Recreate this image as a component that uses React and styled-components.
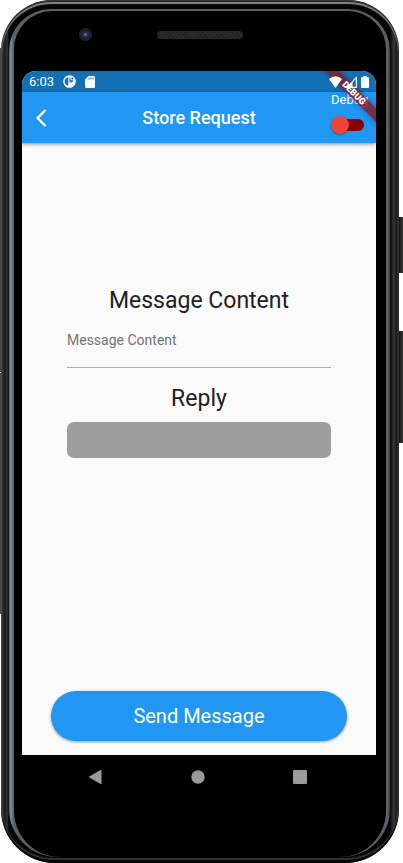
import React, { useState } from "react";
import styled, { createGlobalStyle } from "styled-components";

const GlobalStyle = createGlobalStyle`
  * { box-sizing: border-box; }
  body { margin: 0; background: #fff; font-family: Roboto, "Noto Sans", sans-serif; }
  button, input { font: inherit; }
`;

const Device = styled.div`
  position: relative;
  display: flex;
  min-height: 100vh;
  padding: 0 4px 0 1px;
`;

const SideKey = styled.span`
  position: absolute;
  top: ${(p) => p.$top}px;
  height: ${(p) => p.$height}px;
  ${(p) => p.$side}: 0;
  width: ${(p) => (p.$side === "left" ? 1 : 4)}px;
  background: ${(p) => (p.$side === "left" ? "#4a4a4a" : "linear-gradient(90deg, #111, #3c3c3c)")};
`;

const Case = styled.div`
  flex: 1;
  display: flex;
  padding: 2px 1px 3px;
  border-radius: 51px 51px 54px 54px;
  background: linear-gradient(90deg, #4a4a4a, #222 8px, #222 calc(100% - 8px), #303030);
  box-shadow: inset 0 1px 0 #3a3a3a, inset 0 -3px 0 #060606;
`;

const Edge = styled.div`
  flex: 1;
  display: flex;
  padding: 7px 8px 3px 7px;
  border-radius: 49px 49px 51px 51px;
  background: linear-gradient(90deg, #303030, #1d1d1b 3px, #343434 5px, #050505 7px, #050505 calc(100% - 8px), #151515 calc(100% - 7px), #393939 calc(100% - 4px), #1b1b1b calc(100% - 2px), #242424);
  box-shadow: inset 0 2px 1px #858987, inset 0 -2px 0 #303030;
`;

const Rim = styled.div`
  flex: 1;
  display: flex;
  padding: 2px 4px 0 5px;
  border-radius: 42px 42px 48px 48px;
  background: linear-gradient(90deg, #5e646d, #858b94 2px, #5d646e 4px, #5c5e66 6px, #5c5e66 calc(100% - 4px), #65676d calc(100% - 3px), #404147);
`;

const Glass = styled.div`
  flex: 1;
  display: flex;
  flex-direction: column;
  padding: 0 10px 0 8px;
  border-radius: 38px 38px 46px 46px;
  background: #000;
`;

const Forehead = styled.div`
  position: relative;
  height: 60px;
  display: flex;
  justify-content: center;
  padding-top: 20px;
`;

const Speaker = styled.div`
  width: 86px;
  height: 8px;
  margin-left: 2px;
  border-radius: 4px;
  background: repeating-linear-gradient(45deg, #202221 0 1px, #292b2a 1px 3px);
`;

const Camera = styled.div`
  position: absolute;
  left: 57px;
  top: 17px;
  width: 13px;
  height: 13px;
  border-radius: 50%;
  background: radial-gradient(circle, #5360a0 0 1px, #262c56 2px 3px, #1b1c28 4px, #242426 6px);
`;

const Screen = styled.main`
  position: relative;
  flex: 1;
  display: flex;
  flex-direction: column;
  overflow: hidden;
  border-radius: 14px 14px 0 0;
  background: #fafafa;
`;

const StatusBar = styled.div`
  display: flex;
  align-items: center;
  height: 21px;
  padding: 0 7px;
  background: #1470b5;
  color: #fff;
  font-size: 13px;
`;

const Clock = styled.time`
  margin-right: 9px;
`;

const StatusIcons = styled.div`
  position: relative;
  z-index: 2;
  display: flex;
  align-items: center;
  gap: ${(p) => p.$gap}px;
  margin-left: ${(p) => (p.$end ? "auto" : "0")};

  svg { display: block; fill: #fff; }
`;

const AppBar = styled.header`
  display: grid;
  grid-template-columns: 60px 1fr 60px;
  align-items: center;
  height: 51px;
  background: #2196f3;
  color: #fff;
  box-shadow: 0 1px 4px rgba(0, 0, 0, 0.45);
`;

const BackButton = styled.button`
  display: flex;
  align-items: center;
  height: 48px;
  padding: 0 0 0 13px;
  border: 0;
  background: none;
  color: inherit;
`;

const Title = styled.h1`
  margin: 0;
  text-align: center;
  font-size: 18px;
  font-weight: 500;
  line-height: 24px;
`;

const SwitchLabel = styled.label`
  display: flex;
  flex-direction: column;
  align-self: start;
  align-items: flex-start;
  padding-left: 15px;
  font-size: 13px;
  line-height: 16px;
`;

const Switch = styled.input`
  appearance: none;
  display: flex;
  align-items: center;
  width: 30px;
  height: 12px;
  margin: 11px 0 0 3px;
  border-radius: 6px;
  background: #850000;

  &::before {
    content: "";
    width: 18px;
    height: 18px;
    margin-left: ${(p) => (p.checked ? 15 : -3)}px;
    flex: none;
    border-radius: 50%;
    background: #f44336;
    box-shadow: 0 1px 2px rgba(0, 0, 0, 0.4);
  }
`;

const Ribbon = styled.div`
  position: absolute;
  z-index: 1;
  top: 17px;
  right: -23px;
  width: 90px;
  height: 10px;
  transform: rotate(45deg);
  background: rgba(136, 24, 40, 0.82);
  box-shadow: 0 0 5px rgba(0, 0, 0, 0.4);
  color: #fff;
  text-align: center;
  font-size: 9px;
  font-weight: 900;
  line-height: 10px;
  pointer-events: none;
`;

const Form = styled.form`
  flex: 1;
  display: flex;
  flex-direction: column;
  padding: 0 29px 14px;
`;

const Fields = styled.div`
  flex: 1;
  display: grid;
  grid-template-rows: 8fr auto 13fr;
  padding: 0 16px;
`;

const FieldGroup = styled.div`
  grid-row: 2;
  display: flex;
  flex-direction: column;
`;

const Heading = styled.label`
  text-align: center;
  color: #212121;
  font-size: 23px;
  line-height: 28px;
`;

const MessageInput = styled.input`
  width: 100%;
  height: 53px;
  margin-bottom: 17px;
  padding: 0 0 2px;
  border: 0;
  border-bottom: 1px solid #acacac;
  outline: 0;
  background: none;
  color: #212121;
  font-size: 14px;

  &::placeholder { color: #747474; opacity: 1; }
`;

const ReplyOutput = styled.output`
  height: 36px;
  margin-top: 9px;
  border-radius: 7px;
  background: #9e9e9e;
`;

const SendButton = styled.button`
  height: 50px;
  border: 0;
  border-radius: 25px;
  background: #2196f3;
  color: #fff;
  font-size: 20px;
  box-shadow: 0 1px 3px rgba(0, 0, 0, 0.4);
`;

const NavBar = styled.nav`
  display: flex;
  justify-content: space-between;
  height: 102px;
  padding: 10px 64px 0 61px;
`;

const NavButton = styled.button`
  width: 24px;
  height: 24px;
  padding: 0;
  border: 0;
  background: none;

  svg { display: block; fill: #9a9a9a; }
`;

export default function App() {
  const [debug, setDebug] = useState(false);
  const [message, setMessage] = useState("");

  return (
    <>
      <GlobalStyle />
      <Device>
        <SideKey $side="left" $top={48} $height={324} />
        <SideKey $side="left" $top={373} $height={241} />
        <SideKey $side="right" $top={217} $height={56} />
        <SideKey $side="right" $top={331} $height={112} />
        <Case>
          <Edge>
            <Rim>
              <Glass>
                <Forehead>
                  <Camera />
                  <Speaker />
                </Forehead>
                <Screen>
                  <StatusBar>
                    <Clock>6:03</Clock>
                    <StatusIcons $gap={9}>
                      <svg width="13" height="13" viewBox="0 0 13 13">
                        <circle cx="6.5" cy="6.5" r="6.3" />
                        <path d="M5.3 2.4H4.6A4.3 4.3 0 0 0 4.6 10.6H5.3ZM6.5 2.4H7.6V5.2H10.3A2.6 2.6 0 0 1 7.7 7.6H6.5Z" fill="#1470b5" />
                        <circle cx="9.4" cy="3.6" r="1.1" fill="#1470b5" />
                      </svg>
                      <svg width="10" height="12" viewBox="0 0 10 12">
                        <path d="M3.5 0H8.5Q10 0 10 1.5V10.5Q10 12 8.5 12H1.5Q0 12 0 10.5V3.5Z" />
                        <path d="M3.5 1.5H4.5V3.5H3.5ZM5.5 1.5H6.5V3.5H5.5ZM7.5 1.5H8.5V3.5H7.5Z" fill="#1470b5" />
                      </svg>
                    </StatusIcons>
                    <StatusIcons $gap={4} $end>
                      <svg width="13" height="12" viewBox="0 0 13 12">
                        <path d="M0 3Q6.5 -2.5 13 3L6.5 12Z" />
                      </svg>
                      <svg width="11" height="12" viewBox="0 0 11 12">
                        <path d="M0 12L11 0V12ZM6.6 6.4V10.8H9.8V2.9Z" fillRule="evenodd" />
                      </svg>
                      <svg width="8" height="12" viewBox="0 0 8 12">
                        <path d="M2.3 0H5.7V1.3H7Q8 1.3 8 2.3V11Q8 12 7 12H1Q0 12 0 11V2.3Q0 1.3 1 1.3H2.3Z" />
                      </svg>
                    </StatusIcons>
                  </StatusBar>
                  <AppBar>
                    <BackButton aria-label="Back">
                      <svg width="12" height="18" viewBox="0 0 12 18" fill="none" stroke="currentColor" strokeWidth="2.4">
                        <path d="M10.5 1L2.5 9L10.5 17" />
                      </svg>
                    </BackButton>
                    <Title>Store Request</Title>
                    <SwitchLabel>
                      Debug
                      <Switch type="checkbox" role="switch" checked={debug} onChange={(e) => setDebug(e.target.checked)} />
                    </SwitchLabel>
                  </AppBar>
                  <Ribbon>DEBUG</Ribbon>
                  <Form onSubmit={(e) => e.preventDefault()}>
                    <Fields>
                      <FieldGroup>
                        <Heading htmlFor="message">Message Content</Heading>
                        <MessageInput
                          id="message"
                          placeholder="Message Content"
                          value={message}
                          onChange={(e) => setMessage(e.target.value)}
                        />
                        <Heading htmlFor="reply">Reply</Heading>
                        <ReplyOutput id="reply" />
                      </FieldGroup>
                    </Fields>
                    <SendButton type="submit">Send Message</SendButton>
                  </Form>
                </Screen>
                <NavBar>
                  <NavButton aria-label="Back">
                    <svg width="24" height="24" viewBox="0 0 24 24"><path d="M5.5 12L17.5 5Q18.5 4.5 18.5 5.5V18.5Q18.5 19.5 17.5 19Z" /></svg>
                  </NavButton>
                  <NavButton aria-label="Home">
                    <svg width="24" height="24" viewBox="0 0 24 24"><circle cx="12" cy="12" r="6.7" /></svg>
                  </NavButton>
                  <NavButton aria-label="Overview">
                    <svg width="24" height="24" viewBox="0 0 24 24"><rect x="5" y="5" width="14" height="14" rx="1" /></svg>
                  </NavButton>
                </NavBar>
              </Glass>
            </Rim>
          </Edge>
        </Case>
      </Device>
    </>
  );
}
